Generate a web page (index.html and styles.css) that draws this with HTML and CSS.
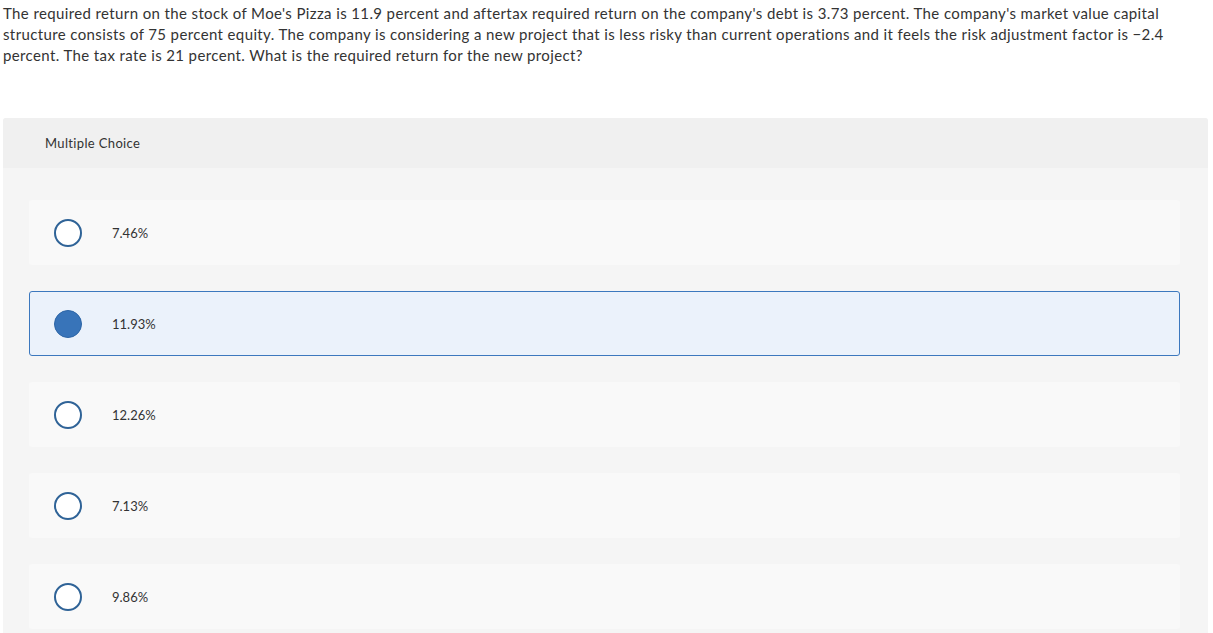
FILE: index.html
```html
<!DOCTYPE html>
<html>
<head>
<meta charset="utf-8">
<link rel="stylesheet" href="styles.css">
</head>
<body>
<div class="page">
  <p class="question">The required return on the stock of Moe's Pizza is 11.9 percent and aftertax required return on the company's debt is 3.73 percent. The company's market value capital structure consists of 75 percent equity. The company is considering a new project that is less risky than current operations and it feels the risk adjustment factor is −2.4 percent. The tax rate is 21 percent. What is the required return for the new project?</p>
  <div class="panel">
    <div class="panel-head">Multiple Choice</div>
    <div class="choices">
      <div class="choice"><span class="radio"></span><span class="label">7.46%</span></div>
      <div class="choice selected"><span class="radio"></span><span class="label">11.93%</span></div>
      <div class="choice"><span class="radio"></span><span class="label">12.26%</span></div>
      <div class="choice"><span class="radio"></span><span class="label">7.13%</span></div>
      <div class="choice"><span class="radio"></span><span class="label">9.86%</span></div>
    </div>
  </div>
</div>
</body>
</html>
```

FILE: styles.css
```css
html, body {
  margin: 0;
  padding: 0;
  background: #ffffff;
}
body {
  font-family: "Lato", "Open Sans", sans-serif;
  color: #333333;
  overflow: hidden;
}
.page {
  padding: 3px 5px 0 3px;
}
.question {
  margin: 0;
  font-size: 15px;
  line-height: 21px;
  letter-spacing: 0.38px;
  color: #333333;
  width: 1185px;
}
.panel {
  margin-top: 52px;
  background: #f5f5f5;
  border-radius: 3px 3px 0 0;
  height: 520px;
}
.panel-head {
  height: 50px;
  background: #f0f0f0;
  border-radius: 3px 3px 0 0;
  display: flex;
  align-items: center;
  padding-left: 42px;
  font-size: 13px;
  letter-spacing: 0.35px;
  color: #333333;
}
.choices {
  padding: 32px 28px 0 26px;
  display: flex;
  flex-direction: column;
  gap: 26px;
}
.choice {
  height: 65px;
  box-sizing: border-box;
  background: #f9f9f9;
  border: 1px solid transparent;
  border-radius: 3px;
  display: flex;
  align-items: center;
  padding-left: 24px;
}
.choice.selected {
  background: #ebf2fb;
  border-color: #3c78be;
}
.radio {
  width: 28px;
  height: 28px;
  box-sizing: border-box;
  border-radius: 50%;
  border: 2px solid #2f6397;
  background: #ffffff;
  flex: none;
}
.selected .radio {
  background: #3874b9;
  border: 1px solid #2c65a6;
}
.label {
  margin-left: 30px;
  font-size: 13px;
  color: #333333;
}
```
